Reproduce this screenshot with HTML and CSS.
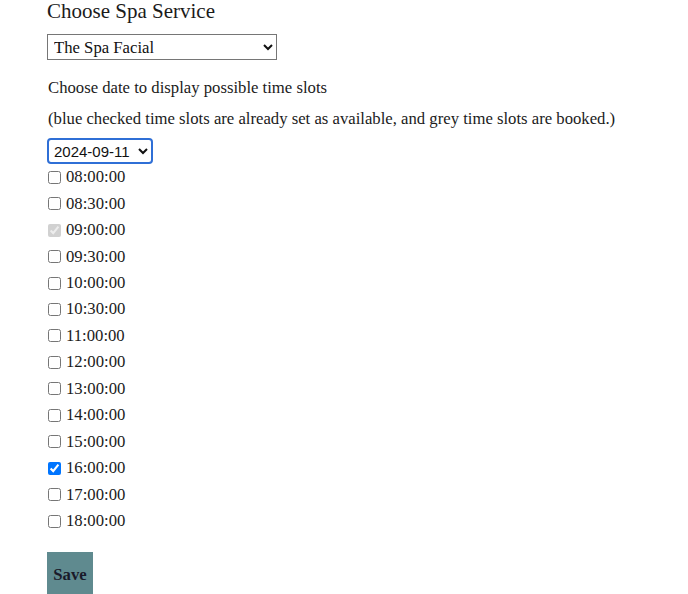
FILE: index.html
```html
<!DOCTYPE html>
<html>
<head>
<meta charset="utf-8">
<link rel="stylesheet" href="styles.css">
</head>
<body>
<div class="page">
  <h2 class="title">Choose Spa Service</h2>
  <select class="service">
    <option>The Spa Facial</option>
  </select>
  <p class="note">Choose date to display possible time slots</p>
  <p class="note note2">(blue checked time slots are already set as available, and grey time slots are booked.)</p>
  <select class="date">
    <option>2024-09-11</option>
  </select>
  <div class="slots">
    <label class="slot"><input type="checkbox">08:00:00</label>
    <label class="slot"><input type="checkbox">08:30:00</label>
    <label class="slot"><input type="checkbox" checked disabled>09:00:00</label>
    <label class="slot"><input type="checkbox">09:30:00</label>
    <label class="slot"><input type="checkbox">10:00:00</label>
    <label class="slot"><input type="checkbox">10:30:00</label>
    <label class="slot"><input type="checkbox">11:00:00</label>
    <label class="slot"><input type="checkbox">12:00:00</label>
    <label class="slot"><input type="checkbox">13:00:00</label>
    <label class="slot"><input type="checkbox">14:00:00</label>
    <label class="slot"><input type="checkbox">15:00:00</label>
    <label class="slot"><input type="checkbox" checked>16:00:00</label>
    <label class="slot"><input type="checkbox">17:00:00</label>
    <label class="slot"><input type="checkbox">18:00:00</label>
  </div>
  <button class="save">Save</button>
</div>
</body>
</html>
```
FILE: styles.css
```css
html, body {
  margin: 0;
  padding: 0;
  background: #ffffff;
}
body {
  font-family: "Liberation Serif", "Times New Roman", serif;
  color: #1b1b1b;
}
.page {
  padding: 0 0 0 47px;
  display: flex;
  flex-direction: column;
  align-items: flex-start;
}
.title {
  font-size: 21px;
  font-weight: normal;
  margin: 0;
  line-height: 23px;
  color: #1b1b1b;
}
.service {
  margin-top: 11px;
  width: 230px;
  height: 26px;
  font-family: "Liberation Serif", serif;
  font-size: 16.7px;
  color: #111;
  border: 1px solid #767676;
  border-radius: 0;
  background: #fff;
  padding: 0 2px;
}
.note {
  margin: 18px 0 0 1px;
  font-size: 16.7px;
  line-height: 20px;
}
.note2 {
  margin-top: 11px;
}
.date {
  margin-top: 9px;
  width: 106px;
  height: 26px;
  font-family: "Liberation Sans", Arial, sans-serif;
  font-size: 15px;
  color: #111;
  border: 2px solid #2f6fd6;
  border-radius: 4px;
  background: #fff;
  padding: 0 1px;
}
.slots {
  display: flex;
  flex-direction: column;
  margin-top: 0;
}
.slot {
  display: flex;
  align-items: center;
  height: 26.46px;
  font-size: 16.7px;
}
.slot input {
  margin: 0 5px 0 1px;
  width: 13px;
  height: 13px;
}
.save {
  margin-top: 18px;
  width: 46px;
  height: 44px;
  background: #5f8a8f;
  border: none;
  font-family: "Liberation Serif", serif;
  font-weight: bold;
  font-size: 16.7px;
  color: #1a1a2a;
  padding: 2px 0 0;
}
```
